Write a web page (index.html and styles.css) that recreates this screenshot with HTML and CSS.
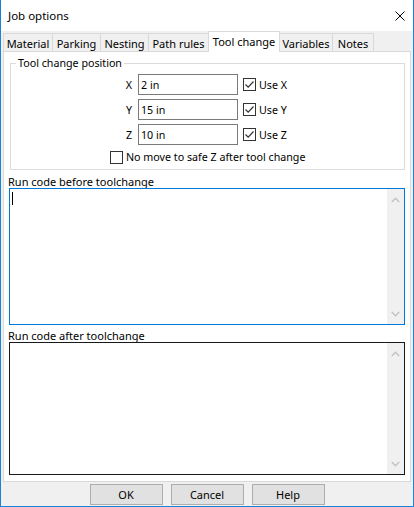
FILE: index.html
```html
<!DOCTYPE html>
<html>
<head>
<meta charset="utf-8">
<title>Job options</title>
<link rel="stylesheet" href="styles.css">
</head>
<body>
<div class="window">
  <div class="titlebar">
    <span class="title">Job options</span>
    <svg class="close" width="10" height="10" viewBox="0 0 10 10"><path d="M0.5 0.5L9.5 9.5M9.5 0.5L0.5 9.5" stroke="#000" stroke-width="1" fill="none"/></svg>
  </div>
  <div class="tabs">
    <div class="tab t-material">Material</div>
    <div class="tab t-parking">Parking</div>
    <div class="tab t-nesting">Nesting</div>
    <div class="tab t-path">Path rules</div>
    <div class="tab active t-tool">Tool change</div>
    <div class="tab t-vars">Variables</div>
    <div class="tab t-notes">Notes</div>
  </div>
  <div class="panel">
    <fieldset class="group">
      <legend>Tool change position</legend>
      <div class="row">
        <span class="axis">X</span>
        <div class="input">2 in</div>
        <span class="check"><svg width="11" height="11" viewBox="0 0 11 11"><path d="M1.5 5.5L4.2 8.2L9.5 2.5" stroke="#333" stroke-width="1.2" fill="none"/></svg></span>
        <span>Use X</span>
      </div>
      <div class="row">
        <span class="axis">Y</span>
        <div class="input">15 in</div>
        <span class="check"><svg width="11" height="11" viewBox="0 0 11 11"><path d="M1.5 5.5L4.2 8.2L9.5 2.5" stroke="#333" stroke-width="1.2" fill="none"/></svg></span>
        <span>Use Y</span>
      </div>
      <div class="row">
        <span class="axis">Z</span>
        <div class="input">10 in</div>
        <span class="check"><svg width="11" height="11" viewBox="0 0 11 11"><path d="M1.5 5.5L4.2 8.2L9.5 2.5" stroke="#333" stroke-width="1.2" fill="none"/></svg></span>
        <span>Use Z</span>
      </div>
      <div class="row safe">
        <span class="check"></span>
        <span>No move to safe Z after tool change</span>
      </div>
    </fieldset>
    <div class="caption">Run code before toolchange</div>
    <div class="memo focused">
      <div class="memo-text"><span class="caret"></span></div>
      <div class="scrollbar">
        <svg width="9" height="6" viewBox="0 0 9 6"><path d="M0.8 5L4.5 1.3L8.2 5" stroke="#c3c3c3" stroke-width="1.5" fill="none"/></svg>
        <svg width="9" height="6" viewBox="0 0 9 6"><path d="M0.8 1L4.5 4.7L8.2 1" stroke="#c3c3c3" stroke-width="1.5" fill="none"/></svg>
      </div>
    </div>
    <div class="caption second">Run code after toolchange</div>
    <div class="memo after">
      <div class="memo-text"></div>
      <div class="scrollbar">
        <svg width="9" height="6" viewBox="0 0 9 6"><path d="M0.8 5L4.5 1.3L8.2 5" stroke="#c3c3c3" stroke-width="1.5" fill="none"/></svg>
        <svg width="9" height="6" viewBox="0 0 9 6"><path d="M0.8 1L4.5 4.7L8.2 1" stroke="#c3c3c3" stroke-width="1.5" fill="none"/></svg>
      </div>
    </div>
  </div>
  <div class="buttons">
    <div class="btn">OK</div>
    <div class="btn">Cancel</div>
    <div class="btn">Help</div>
  </div>
</div>
</body>
</html>
```
FILE: styles.css
```css
html, body {
  margin: 0;
  padding: 0;
  background: #fff;
}
body {
  font-family: "Noto Sans", "Open Sans", sans-serif;
  font-size: 10.7px;
  color: #000;
}
.window {
  width: 414px;
  height: 507px;
  box-sizing: border-box;
  border: 1px solid #1883d7;
  border-top: none;
  background: #f0f0f0;
  display: flex;
  flex-direction: column;
}
.titlebar {
  flex: none;
  height: 31px;
  background: #fff;
  display: flex;
  align-items: center;
  justify-content: space-between;
  padding: 0 8px 0 7px;
}
.title {
  font-size: 11.5px;
}
.tabs {
  flex: none;
  height: 20px;
  display: flex;
  align-items: flex-end;
  padding-left: 2px;
}
.tab {
  height: 18px;
  box-sizing: border-box;
  border: 1px solid #d9d9d9;
  border-bottom: none;
  margin-left: -1px;
  padding-top: 1px;
  display: flex;
  align-items: center;
  justify-content: center;
  background: #f0f0f0;
  font-size: 11px;
}
.tab:first-child { margin-left: 0; }
.t-material { width: 50px; }
.t-parking { width: 49px; }
.t-nesting { width: 49px; }
.t-path { width: 61px; }
.t-tool { width: 72px; }
.t-vars { width: 54px; }
.t-notes { width: 42px; }
.tab.active {
  height: 21px;
  margin-bottom: -1px;
  padding-top: 0;
  padding-bottom: 2px;
  background: #fff;
  position: relative;
  z-index: 1;
}
.panel {
  flex: none;
  height: 431px;
  box-sizing: border-box;
  margin: 0 2px;
  border: 1px solid #d9d9d9;
  background: #fff;
  display: flex;
  flex-direction: column;
}
.group {
  margin: 4px 5px 0 6px;
  padding: 0 0 5px 0;
  border: 1px solid #dcdcdc;
  min-width: 0;
}
.group legend {
  margin-left: 5px;
  padding: 0 2px;
  line-height: 14px;
}
.row {
  display: flex;
  align-items: center;
  height: 21px;
  margin-top: 4px;
}
.axis {
  width: 127px;
  box-sizing: border-box;
  text-align: right;
  padding-right: 6px;
}
.input {
  width: 100px;
  height: 21px;
  box-sizing: border-box;
  border: 1px solid #7a7a7a;
  padding-left: 2px;
  display: flex;
  align-items: center;
  background: #fff;
}
.check {
  width: 13px;
  height: 13px;
  box-sizing: border-box;
  border: 1px solid #333;
  margin-left: 5px;
  margin-right: 3px;
  background: #fff;
  display: flex;
  align-items: center;
  justify-content: center;
}
.row.safe {
  height: 14px;
  margin-top: 5px;
  padding-left: 99px;
}
.row.safe .check {
  margin-left: 0;
}
.caption {
  margin: 5px 0 0 4px;
  line-height: 13px;
  font-size: 11px;
}
.caption.second {
  margin-top: 4px;
}
.memo {
  margin-left: 5px;
  width: 396px;
  height: 137px;
  box-sizing: border-box;
  border: 1px solid #0078d7;
  display: flex;
}
.memo.after {
  height: 133px;
  border-color: #1a1a1a;
}
.memo-text {
  flex: 1;
  padding: 3px 0 0 2px;
}
.caret {
  display: block;
  width: 1px;
  height: 13px;
  background: #000;
}
.scrollbar {
  width: 17px;
  background: #f0f0f0;
  display: flex;
  flex-direction: column;
  justify-content: space-between;
  align-items: center;
  padding: 8px 0 7px;
  box-sizing: border-box;
}
.buttons {
  flex: 1;
  display: flex;
  justify-content: center;
  align-items: flex-start;
  gap: 8px;
  padding-top: 2px;
}
.btn {
  width: 73px;
  height: 21px;
  box-sizing: border-box;
  border: 1px solid #adadad;
  background: #e1e1e1;
  display: flex;
  align-items: center;
  justify-content: center;
  font-size: 11px;
}
```
